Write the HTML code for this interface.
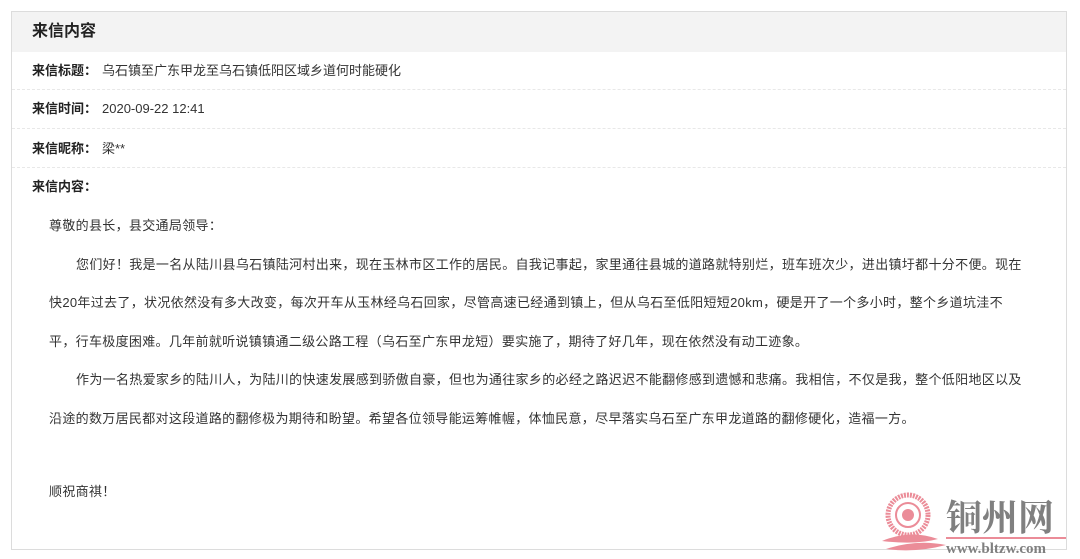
<!DOCTYPE html>
<html><head><meta charset="utf-8"><style>
body{margin:0;background:#fff;width:1080px;height:559px;overflow:hidden;font-family:"Liberation Sans","Noto Sans CJK SC",sans-serif;color:#333;}
.panel{position:absolute;left:11px;top:11px;width:1054px;height:537px;border:1px solid #dcdcdc;}
.hd{height:40px;background:#f3f3f3;font-size:16px;font-weight:bold;line-height:40px;padding-left:20px;color:#222;}
.row{position:absolute;left:0;width:1054px;font-size:13px;line-height:20px;height:20px;}
.row b{position:absolute;left:20px;top:0;color:#222;}
.row span{position:absolute;left:90px;top:0;}
.sep{position:absolute;left:0;width:1054px;border-top:1px dashed #e8e8e8;}
.body{position:absolute;left:37px;top:195px;width:1010px;font-size:13px;line-height:38.5px;letter-spacing:0.32px;white-space:nowrap;}
.body p{margin:0}
.ind{text-indent:27px}
</style></head><body>
<div class="panel">
<div class="hd">来信内容</div>
<div class="row" style="top:49px"><b>来信标题：</b><span>乌石镇至广东甲龙至乌石镇低阳区域乡道何时能硬化</span></div>
<div class="sep" style="top:77px"></div>
<div class="row" style="top:87px"><b>来信时间：</b><span>2020-09-22 12:41</span></div>
<div class="sep" style="top:116px"></div>
<div class="row" style="top:127px"><b>来信昵称：</b><span>梁**</span></div>
<div class="sep" style="top:155px"></div>
<div class="row" style="top:165px"><b>来信内容：</b></div>
<div class="body">
<p>尊敬的县长，县交通局领导：</p>
<p class="ind">您们好！我是一名从陆川县乌石镇陆河村出来，现在玉林市区工作的居民。自我记事起，家里通往县城的道路就特别烂，班车班次少，进出镇圩都十分不便。现在<br>快20年过去了，状况依然没有多大改变，每次开车从玉林经乌石回家，尽管高速已经通到镇上，但从乌石至低阳短短20km，硬是开了一个多小时，整个乡道坑洼不<br>平，行车极度困难。几年前就听说镇镇通二级公路工程（乌石至广东甲龙短）要实施了，期待了好几年，现在依然没有动工迹象。</p>
<p class="ind">作为一名热爱家乡的陆川人，为陆川的快速发展感到骄傲自豪，但也为通往家乡的必经之路迟迟不能翻修感到遗憾和悲痛。我相信，不仅是我，整个低阳地区以及<br>沿途的数万居民都对这段道路的翻修极为期待和盼望。希望各位领导能运筹帷幄，体恤民意，尽早落实乌石至广东甲龙道路的翻修硬化，造福一方。</p>
<p style="height:35px">&nbsp;</p>
<p>顺祝商祺！</p>
</div>
</div>
<svg style="position:absolute;left:880px;top:485px" width="200" height="74">
<circle cx="28" cy="30" r="20" fill="none" stroke="#eb8c98" stroke-width="5" stroke-dasharray="2 1"/>
<circle cx="28" cy="30" r="12" fill="none" stroke="#eb8c98" stroke-width="2"/>
<circle cx="28" cy="30" r="6" fill="#eb8c98"/>
<path d="M2 56 Q30 44 58 54 Q36 60 2 56Z M6 64 Q36 54 66 60 Q36 68 6 64Z" fill="#eb8c98"/>
<text x="66" y="45" font-family="Noto Serif CJK SC,serif" font-size="36" font-weight="bold" fill="#808080">铜州网</text>
<rect x="66" y="52" width="120" height="2" fill="#eb8c98"/>
<text x="66" y="68" font-family="Liberation Serif,serif" font-size="15" font-weight="bold" fill="#808080">www.bltzw.com</text>
</svg>
</body></html>
